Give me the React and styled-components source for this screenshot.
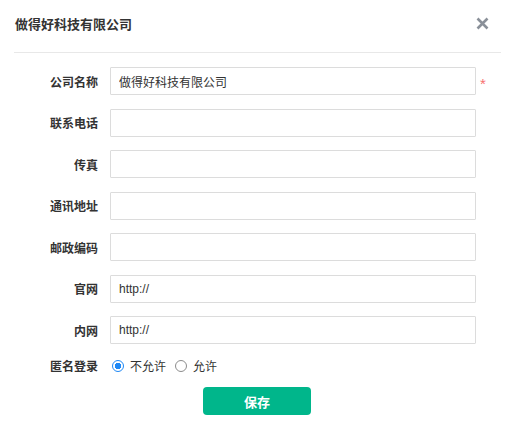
import React from "react";
import styled, { createGlobalStyle } from "styled-components";

const GlobalStyle = createGlobalStyle`
  body {
    margin: 0;
    background: #fff;
    font-family: "Liberation Sans", "Noto Sans CJK SC", sans-serif;
    color: #333;
  }
`;

const Dialog = styled.div`
  width: 515px;
  box-sizing: border-box;
  padding: 0 14px;
`;

const Header = styled.div`
  height: 46px;
  padding: 0 12px 6px 1px;
  display: flex;
  align-items: center;
  justify-content: space-between;
  border-bottom: 1px solid #e8e8e8;
`;

const Title = styled.h3`
  margin: 0;
  font-size: 13px;
  font-weight: bold;
  color: #333;
`;

const CloseBtn = styled.button`
  width: 13px;
  height: 13px;
  padding: 0;
  border: none;
  background: transparent;
  display: flex;
  cursor: pointer;
`;

const Form = styled.form`
  padding-top: 14px;
  display: flex;
  flex-direction: column;
  gap: 13.5px;
`;

const Row = styled.div`
  display: flex;
  align-items: center;
  height: ${(p) => p.$height || 28}px;
`;

const Label = styled.label`
  width: 84px;
  margin-right: 12px;
  text-align: right;
  font-size: 12px;
  font-weight: bold;
  color: #333;
`;

const Input = styled.input`
  width: 366px;
  height: 28px;
  box-sizing: border-box;
  border: 1px solid #dcdcdc;
  border-radius: 1px;
  padding: 0 8px;
  font-family: inherit;
  font-size: 12px;
  color: #333;
  outline: none;
`;

const Required = styled.span`
  margin-left: 4px;
  color: #f7706e;
  font-size: 15px;
  line-height: 1;
  padding-top: 4px;
`;

const RadioGroup = styled.div`
  display: flex;
  align-items: center;
  margin-left: 2px;
  font-size: 12px;
  color: #333;
`;

const RadioItem = styled.label`
  display: flex;
  align-items: center;
  margin-right: 9px;
  cursor: pointer;
`;

const Radio = styled.input.attrs({ type: "radio" })`
  appearance: none;
  width: 12px;
  height: 12px;
  margin: 0 6px 0 0;
  border-radius: 50%;
  box-sizing: border-box;
  border: 1px solid ${(p) => (p.checked ? "#1e88f5" : "#8c8c8c")};
  background: ${(p) =>
    p.checked ? "radial-gradient(circle, #1e88f5 0 3px, #fff 3.5px)" : "#fff"};
`;

const Footer = styled.div`
  display: flex;
  justify-content: center;
  padding-right: 1px;
`;

const SaveBtn = styled.button`
  width: 108px;
  height: 28px;
  border: none;
  border-radius: 4px;
  background: #00b68b;
  color: #fff;
  font-family: inherit;
  font-size: 13px;
  font-weight: bold;
  cursor: pointer;
`;

const fields = [
  { label: "公司名称", value: "做得好科技有限公司", required: true },
  { label: "联系电话", value: "" },
  { label: "传真", value: "" },
  { label: "通讯地址", value: "" },
  { label: "邮政编码", value: "" },
  { label: "官网", value: "http://" },
  { label: "内网", value: "http://" },
];

const App = () => {
  const [anon, setAnon] = React.useState("no");

  return (
    <Dialog>
      <GlobalStyle />
      <Header>
        <Title>做得好科技有限公司</Title>
        <CloseBtn type="button" aria-label="关闭">
          <svg width="13" height="13" viewBox="0 0 13 13">
            <path
              d="M1.5 1.5 L11.5 11.5 M11.5 1.5 L1.5 11.5"
              stroke="#8a9099"
              strokeWidth="2.6"
              strokeLinecap="butt"
            />
          </svg>
        </CloseBtn>
      </Header>
      <Form onSubmit={(e) => e.preventDefault()}>
        {fields.map((f) => (
          <Row key={f.label}>
            <Label>{f.label}</Label>
            <Input defaultValue={f.value} />
            {f.required && <Required>*</Required>}
          </Row>
        ))}
        <Row $height={16}>
          <Label>匿名登录</Label>
          <RadioGroup>
            <RadioItem>
              <Radio
                name="anon"
                checked={anon === "no"}
                onChange={() => setAnon("no")}
              />
              不允许
            </RadioItem>
            <RadioItem>
              <Radio
                name="anon"
                checked={anon === "yes"}
                onChange={() => setAnon("yes")}
              />
              允许
            </RadioItem>
          </RadioGroup>
        </Row>
        <Footer>
          <SaveBtn type="submit">保存</SaveBtn>
        </Footer>
      </Form>
    </Dialog>
  );
};

export default App;
